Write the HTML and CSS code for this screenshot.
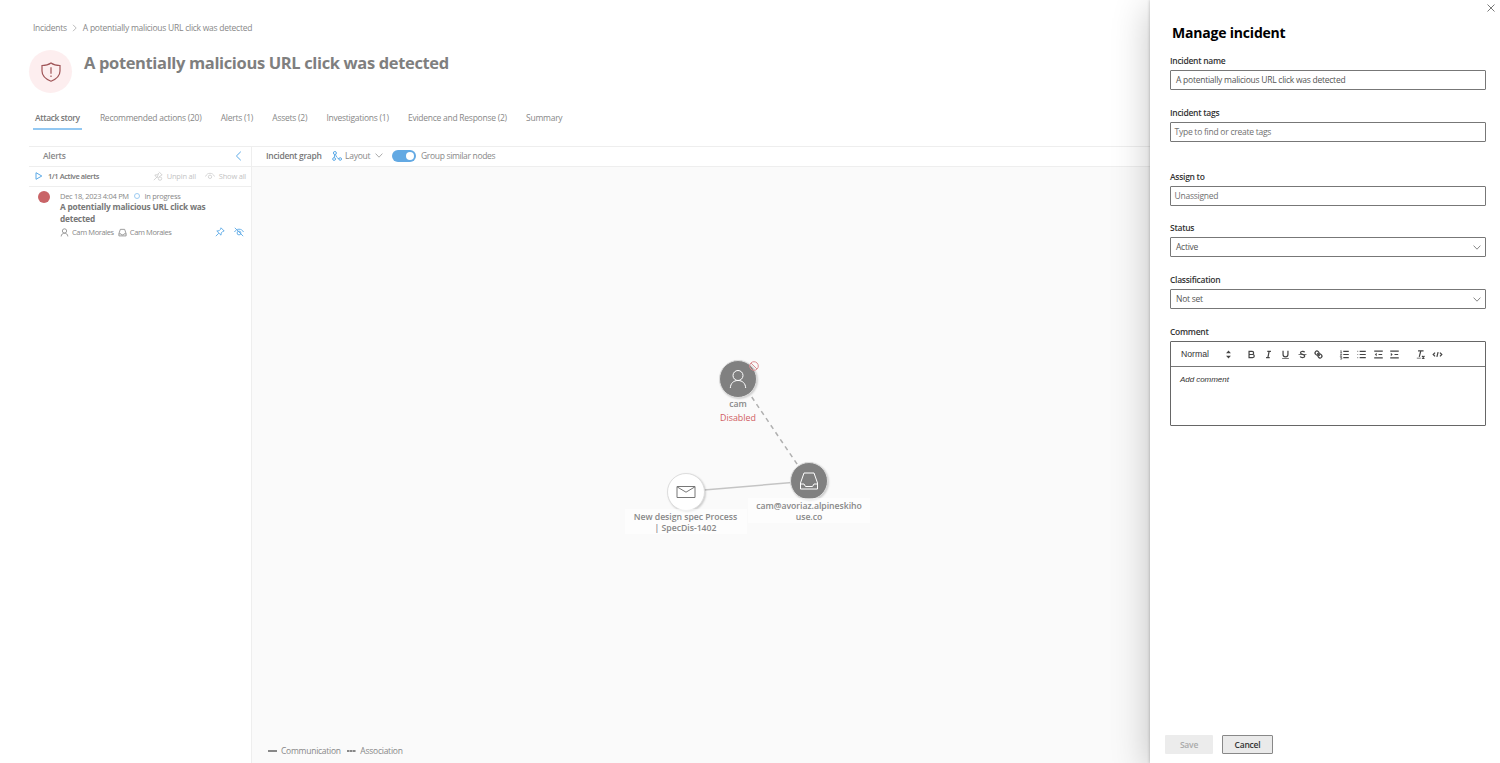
FILE: index.html
```html
<!DOCTYPE html>
<html lang="en">
<head>
<meta charset="utf-8">
<title>Manage incident</title>
<link rel="stylesheet" href="styles.css">
</head>
<body>
<div class="app">
  <main class="page">
    <nav class="breadcrumb">
      <span>Incidents</span>
      <svg class="crumb-sep" viewBox="0 0 5 8"><path d="M1 .8 4.2 4 1 7.2"/></svg>
      <span>A potentially malicious URL click was detected</span>
    </nav>
    <header class="title-row">
      <div class="shield">
        <svg viewBox="0 0 20 20"><path d="M10 .9C7.5 2.8 4.3 3.5 1 3.5V9c0 5 3.500 8 9 10.200C15.500 17 19 14 19 9V3.500C15.700 3.500 12.500 2.800 10 .9Z"/><path d="M10 5.200v6.600M10 13.400v1.600"/></svg>
      </div>
      <h1>A potentially malicious URL click was detected</h1>
    </header>
    <nav class="tabs">
      <a class="tab active">Attack story</a>
      <a class="tab">Recommended actions (20)</a>
      <a class="tab">Alerts (1)</a>
      <a class="tab">Assets (2)</a>
      <a class="tab">Investigations (1)</a>
      <a class="tab">Evidence and Response (2)</a>
      <a class="tab">Summary</a>
    </nav>
    <div class="workspace">
      <aside class="alerts">
        <div class="alerts-head">
          <span>Alerts</span>
          <svg class="collapse" viewBox="0 0 7 10"><path d="M5.800.7 1.400 5l4.400 4.300"/></svg>
        </div>
        <div class="alerts-bar">
          <svg class="play" viewBox="0 0 8 8"><path d="M1 .7v6.600L6.800 4Z"/></svg>
          <span class="active-count">1/1 Active alerts</span>
          <svg class="bar-icon" viewBox="0 0 10 10"><path d="M6 .8 9.200 4 7.800 4.400 5.800 6.400M4 7 1.800 4 4 3.800 5.600 2.200ZM3.800 6.200.8 9.200"/><circle cx="7" cy="7.600" r="1.700"/></svg>
          <span class="muted unpin">Unpin all</span>
          <svg class="bar-icon eye" viewBox="0 0 10 10"><path d="M.5 5.500C1.500 3.300 3 2.300 5 2.300s3.500 1 4.500 3.200"/><circle cx="5" cy="5.800" r="1.700"/></svg>
          <span class="muted">Show all</span>
        </div>
        <article class="alert">
          <span class="severity"></span>
          <div class="alert-body">
            <div class="alert-meta"><span class="date">Dec 18, 2023 4:04 PM</span><i class="ring"></i><span>In progress</span></div>
            <h2>A potentially malicious URL click was detected</h2>
            <div class="alert-foot">
              <svg class="mini" viewBox="0 0 10 10"><circle cx="5" cy="3.300" r="2.400"/><path d="M1.300 9.400C1.500 7 3 5.700 5 5.700s3.500 1.300 3.700 3.700"/></svg>
              <span class="first">Cam Morales</span>
              <svg class="mini" viewBox="0 0 10 10"><path d="M2.600 1.500h4.800L9 6.300v2.500H1V6.300ZM1 6.500h2.300l.7 1.200h2l.7-1.200H9"/></svg>
              <span>Cam Morales</span>
              <svg class="act pin" viewBox="0 0 10 10"><path d="M6 .8 9.200 4 7.800 4.400 6.200 6 6 8.200 1.800 4 4 3.800 5.600 2.200ZM3.800 6.200.8 9.200"/></svg>
              <svg class="act" viewBox="0 0 10 10"><path d="M.5 5C1.500 3.100 3 2.200 5 2.200S8.500 3.100 9.500 5M.8.800l8.400 8.400"/><circle cx="5" cy="6" r="1.900"/></svg>
            </div>
          </div>
        </article>
      </aside>
      <section class="graph">
        <div class="graph-bar">
          <span class="graph-title">Incident graph</span>
          <svg class="layout-icon" viewBox="0 0 10 10"><circle cx="2.900" cy="2" r="1.500"/><circle cx="2.100" cy="8" r="1.400"/><circle cx="8.200" cy="8" r="1.300"/><path d="M2.700 3.500 2.300 6.600M3.600 3.400C4 5.600 5 7 6.900 7.700"/></svg>
          <span class="layout-label">Layout</span>
          <svg class="chev" viewBox="0 0 8 5"><path d="M.6.600 4 4.200 7.400.6"/></svg>
          <span class="toggle"></span>
          <span class="group-label">Group similar nodes</span>
        </div>
        <div class="canvas">
          <svg class="edges" viewBox="0 0 898 597">
            <path class="edge dashed" d="M495 223 547 300"/>
            <path class="edge" d="M452 323 540 315.500"/>
          </svg>
          <div class="node user">
            <div class="disc dark"><svg viewBox="0 0 20 20"><circle cx="10" cy="6.500" r="5"/><path d="M2.300 19c.3-4.700 3.200-7.500 7.700-7.500s7.400 2.800 7.700 7.500"/></svg></div>
            <svg class="blocked" viewBox="0 0 10 10"><circle cx="5" cy="5" r="4.300"/><path d="M2 2l6 6"/></svg>
            <div class="caption name">cam</div>
            <div class="disabled">Disabled</div>
          </div>
          <div class="node mail">
            <div class="disc light"><svg viewBox="0 0 20 20"><path d="M1 4.500h18v11H1ZM1 4.800l9 5.400 9-5.400"/></svg></div>
            <div class="caption box">New design spec Process<br>| SpecDis-1402</div>
          </div>
          <div class="node mailbox">
            <div class="disc dark"><svg viewBox="0 0 20 20"><path d="M5 2h10l3.500 10v6h-17v-6ZM1.500 13H5l1.500 2.500h7L15 13h3.500"/></svg></div>
            <div class="caption box">cam@avoriaz.alpineskiho<br>use.co</div>
          </div>
          <div class="legend">
            <i class="key"></i><span>Communication</span>
            <i class="key dots"></i><span>Association</span>
          </div>
        </div>
      </section>
    </div>
  </main>

  <aside class="drawer">
    <svg class="close" viewBox="0 0 8 8"><path d="M.5.500l7 7M7.500.500l-7 7"/></svg>
    <h2 class="drawer-title">Manage incident</h2>
    <form class="form">
      <label>Incident name</label>
      <div class="field"><span>A potentially malicious URL click was detected</span></div>
      <label>Incident tags</label>
      <div class="field hint tags"><span>Type to find or create tags</span></div>
      <label>Assign to</label>
      <div class="field hint assign"><span>Unassigned</span></div>
      <label>Status</label>
      <div class="field"><span>Active</span><svg class="chev" viewBox="0 0 8 5"><path d="M.6.600 4 4.200 7.400.6"/></svg></div>
      <label>Classification</label>
      <div class="field"><span>Not set</span><svg class="chev" viewBox="0 0 8 5"><path d="M.6.600 4 4.200 7.400.6"/></svg></div>
      <label>Comment</label>
      <div class="editor">
        <div class="tools">
          <span class="normal">Normal</span>
          <svg class="sort" viewBox="0 0 18 18"><path class="fill" d="M5 7h8L9 2.500ZM5 11h8l-4 4.500Z"/></svg>
          <svg viewBox="0 0 18 18"><path d="M5 4h5a2.500 2.500 0 0 1 0 5H5ZM5 9h6a2.500 2.500 0 0 1 0 5H5Z"/></svg>
          <svg viewBox="0 0 18 18"><path d="M7 4h6M5 14h6M8 14l2-10"/></svg>
          <svg viewBox="0 0 18 18"><path d="M5 3v6c0 5 8 5 8 0V3"/><path class="thin" d="M3.500 15.500h11"/></svg>
          <svg viewBox="0 0 18 18"><path class="thin" d="M2.500 9h13"/><path d="M12.500 5.500C11.500 3.300 5.500 3.200 5.700 6.500c.1 2.500 7 2 7 5 0 3.500-6.500 3.200-7.500.8"/></svg>
          <svg viewBox="0 0 18 18"><path d="M7 7l4 4"/><path d="M8.900 4.577a3.476 3.476 0 0 1 .36 4.679A3.476 3.476 0 0 1 4.577 8.900C3.185 7.500 2.035 6.400 4.217 4.217S7.500 3.185 8.900 4.577Z"/><path d="M13.423 9.100a3.476 3.476 0 0 0-4.679-.36 3.476 3.476 0 0 0 .36 4.679c1.392 1.392 2.500 2.542 4.679.36S14.815 10.500 13.423 9.100Z"/></svg>
          <svg class="gap" viewBox="0 0 18 18"><path d="M7 4h9M7 9h9M7 14h9"/><path class="thin" d="M2.500 3l1-.5v4M2 6.500h3M2 9h2.500L2 12h3M2 14h2.500v2.500H2"/></svg>
          <svg viewBox="0 0 18 18"><path d="M6 4h10M6 9h10M6 14h10M2.500 4h1M2.500 9h1M2.500 14h1"/></svg>
          <svg viewBox="0 0 18 18"><path d="M2 3.500h14M2 14.500h14M9 9h6"/><path class="fill" d="M6 6v6L3 9Z"/></svg>
          <svg viewBox="0 0 18 18"><path d="M2 3.500h14M2 14.500h14M9 9h6"/><path class="fill" d="M3 6v6l3-3Z"/></svg>
          <svg class="gap" viewBox="0 0 18 18"><path d="M5 3h9M7 13l2.500-10M11.500 11.500l4 4M15.500 11.500l-4 4"/><path class="thin" d="M3 15h6.500"/></svg>
          <svg viewBox="0 0 18 18"><path d="m5 6-3 3 3 3M13 6l3 3-3 3M10 5 8 13"/></svg>
        </div>
        <div class="comment">Add comment</div>
      </div>
    </form>
    <footer class="actions">
      <button class="btn save" type="button">Save</button>
      <button class="btn cancel" type="button">Cancel</button>
    </footer>
  </aside>
</div>
</body>
</html>
```

FILE: styles.css
```css
* { box-sizing: border-box; }
body { margin: 0; font: 8.500px/12px "Open Sans", "Noto Sans", sans-serif; letter-spacing: -.25px; color: #888; background: #fff; }
svg { display: block; flex: none; fill: none; stroke: currentColor; stroke-width: 1; }
h1, h2 { margin: 0; }
.app { display: flex; width: 1500px; height: 763px; overflow: hidden; }
.page { width: 1150px; height: 763px; display: flex; flex-direction: column; padding-left: 29px; flex: none; }
.breadcrumb { display: flex; align-items: center; height: 12px; margin: 22px 0 0 4px; white-space: nowrap; }
.crumb-sep { width: 5px; height: 8px; margin: 0 5.500px; color: #aaa; stroke-width: .8; }
.title-row { display: flex; height: 43px; margin-top: 16px; }
.shield { width: 43px; height: 43px; border-radius: 50%; background: #fdeeef; color: #a05558; display: flex; align-items: center; justify-content: center; }
.shield svg { width: 20px; height: 20px; stroke-width: 1.200; }
h1 { margin: 1px 0 0 12px; font-size: 16.500px; letter-spacing: -.36px; line-height: 24px; font-weight: 700; color: #7f7f7f; white-space: nowrap; }
.tabs { display: flex; gap: 17.200px; height: 20px; margin: 17px 0 16px 4px; }
.tab { display: block; padding: 2px 1px 0; height: 20px; white-space: nowrap; }
.tab.active { font-weight: 600; color: #777; border-bottom: 2px solid #93c8f2; padding: 2px 2px 0; height: 19.500px; letter-spacing: -.4px; }
.workspace { display: flex; flex: 1; border-top: 1px solid #eee; }
.alerts { width: 223px; border-right: 1px solid #eee; }
.alerts-head { height: 20px; display: flex; align-items: center; justify-content: space-between; padding: 0 9px 2px 14px; border-bottom: 1px solid #eee; font-weight: 600; }
.collapse { width: 7px; height: 10px; color: #5ba9e6; }
.alerts-bar { height: 20px; display: flex; align-items: center; padding: 0 5px 2px 6px; border-bottom: 1px solid #eee; font-size: 7.500px; white-space: nowrap; }
.play { width: 8px; height: 8px; color: #5ba9e6; }
.active-count { font-weight: 600; color: #777; margin-left: 5px; margin-right: auto; letter-spacing: -.42px; }
.bar-icon { width: 10px; height: 10px; color: #ccc; stroke-width: .8; margin-right: 4px; }
.muted { color: #c4c4c4; letter-spacing: -.22px; }
.unpin { margin-right: 9px; }
.alert { display: flex; padding: 4px 7px 0 9px; font-size: 7.500px; letter-spacing: -.3px; }
.severity { width: 12px; height: 12px; border-radius: 50%; background: #c96467; flex: none; }
.alert-body { margin-left: 10px; flex: 1; }
.alert-meta { display: flex; align-items: center; height: 10px; white-space: nowrap; }
.date { width: 69.500px; }
.ring { width: 6px; height: 6px; border: 1px solid #9dccf2; border-radius: 50%; margin: 0 4.500px; }
.alert h2 { font-size: 8.300px; letter-spacing: -.2px; line-height: 12px; font-weight: 700; color: #777; width: 160px; }
.alert-foot { display: flex; align-items: center; height: 14px; letter-spacing: -.38px; white-space: nowrap; }
.mini { width: 9px; height: 9px; margin-right: 3px; stroke-width: .9; }
.first { margin-right: 4px; }
.act { width: 10px; height: 10px; color: #5ba9e6; stroke-width: .9; }
.act.pin { margin-left: auto; margin-right: 9px; }
.graph { flex: 1; display: flex; flex-direction: column; }
.graph-bar { height: 20px; display: flex; align-items: center; padding: 0 0 2px 14px; border-bottom: 1px solid #eee; white-space: nowrap; }
.graph-title { font-weight: 600; color: #777; width: 65.500px; letter-spacing: -.3px; }
.layout-icon { width: 10px; height: 10px; color: #5ba9e6; margin-right: 3.500px; }
.layout-label { width: 27px; margin-right: 3px; }
.chev { width: 8px; height: 5px; stroke-width: .7; }
.toggle { width: 24px; height: 12px; border-radius: 6px; background: #63a9e3; margin: 0 5px 0 9px; padding: 2px; display: flex; justify-content: flex-end; }
.toggle::after { content: ""; width: 8px; height: 8px; border-radius: 50%; background: #fff; }
.group-label { letter-spacing: -.33px; }
.canvas { position: relative; flex: 1; background: #fafafa; }
.edges { position: absolute; inset: 0; width: 898px; height: 597px; }
.edge { stroke: #c4c4c4; stroke-width: 1.500; }
.dashed { stroke: #b0b0b0; stroke-dasharray: 4.500 4; }
.node { position: absolute; width: 122px; display: flex; flex-direction: column; align-items: center; text-align: center; letter-spacing: 0; }
.user { left: 425px; top: 193px; }
.mail { left: 372.500px; top: 305.500px; }
.mailbox { left: 496px; top: 295px; }
.disc { width: 38px; height: 38px; border-radius: 50%; display: flex; align-items: center; justify-content: center; border: 1px solid #ddd; box-shadow: 1px 1px 2px rgba(0,0,0,.18); }
.disc svg { width: 20px; height: 20px; }
.dark { background: #808080; color: #fff; }
.light { background: #fff; color: #777; }
.blocked { position: absolute; left: 71.500px; top: 1px; width: 10px; height: 10px; color: #dc8f93; }
.caption { font-size: 8.700px; line-height: 11px; font-weight: 600; color: #888; white-space: nowrap; }
.caption.name { margin-top: 1px; }
.caption.box { width: 122px; height: 25px; margin-top: -2px; padding-top: 3px; letter-spacing: -.03px; background: rgba(255,255,255,.6); }
.disabled { font-size: 8.900px; line-height: 11px; color: #d05c62; margin-top: 2px; }
.legend { position: absolute; left: 16px; bottom: 6px; display: flex; align-items: center; }
.key { width: 9px; height: 1.500px; background: #888; margin-right: 4px; }
.dots { margin-left: 6.500px; background: repeating-linear-gradient(90deg, #888 0 2.500px, #bbb 2.500px 3px); }
.drawer { width: 350px; height: 763px; position: relative; flex: none; display: flex; flex-direction: column; background: #fff; color: #555; box-shadow: 0 0 3px rgba(0,0,0,.25), 0 8px 36px rgba(0,0,0,.24); }
.close { position: absolute; right: 5px; top: 4px; width: 8px; height: 8px; stroke-width: .8; }
.drawer-title { font-size: 14px; letter-spacing: -.2px; line-height: 20px; font-weight: 700; color: #000; margin: 23px 0 0 22px; }
.form { display: flex; flex-direction: column; margin: 12px 14px 0 20px; }
.form label { height: 12px; line-height: 12px; margin-bottom: 3px; font-weight: 600; letter-spacing: -.28px; color: #333; }
.field { height: 20px; border: 1px solid #777; border-radius: 1px; margin-bottom: 17px; padding: 0 4px 0 5px; display: flex; align-items: center; justify-content: space-between; }
.tags { margin-bottom: 29px; }
.assign { margin-bottom: 16px; }
.hint { color: #707070; padding-left: 3.500px; }
.editor { height: 85px; border: 1px solid #666; border-radius: 1px; font-family: "Liberation Sans", Arial, sans-serif; letter-spacing: 0; color: #333; }
.tools { height: 25px; border-bottom: 1px solid #777; display: flex; align-items: center; padding-left: 10px; }
.tools svg { width: 11px; height: 11px; margin-right: 5.850px; stroke-width: 2; color: #444; }
.tools .fill { fill: currentColor; stroke: none; }
.tools .thin { stroke-width: 1.200; }
.tools .gap { margin-left: 8.700px; }
.normal { width: 41.500px; font-size: 8.700px; }
.tools .sort { margin-right: 12.500px; }
.comment { font-size: 8px; font-style: italic; padding: 7px 9px; letter-spacing: -.05px; }
.actions { display: flex; gap: 9px; margin: auto 0 9px 15px; }
.btn { height: 19px; padding: 0; border-radius: 1px; font: 600 8.500px/12px "Open Sans", sans-serif; letter-spacing: -.2px; }
.save { width: 48px; border: 0; background: #ececec; color: #aaa; }
.cancel { width: 51px; border: 1px solid #888; background: #eaeaea; color: #333; }
```
